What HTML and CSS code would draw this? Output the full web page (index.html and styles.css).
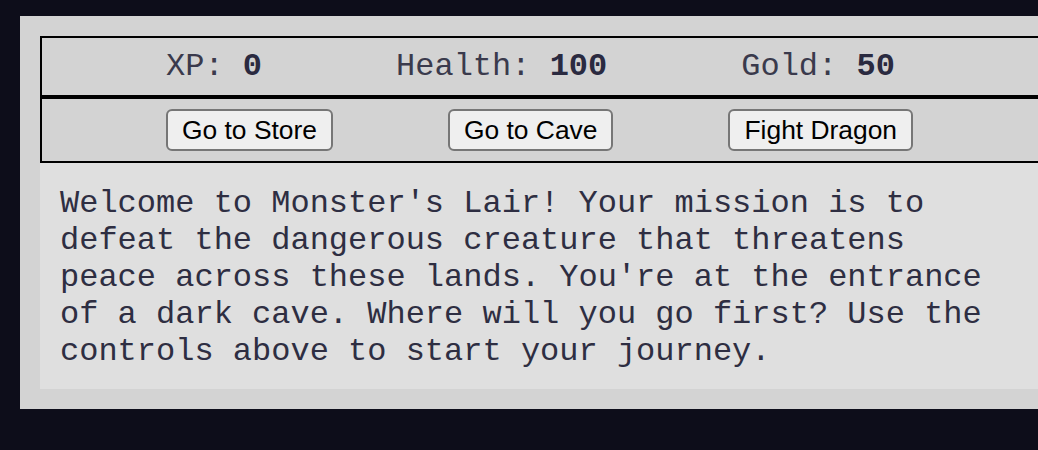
FILE: index.html
```html
<!DOCTYPE html>
<html lang="en">
<head>
<meta charset="utf-8">
<title>Monster's Lair</title>
<link rel="stylesheet" href="styles.css">
</head>
<body>
<div class="game">
  <div class="stats">
    <span class="stat">XP: <strong class="stat-value">0</strong></span>
    <span class="stat">Health: <strong class="stat-value">100</strong></span>
    <span class="stat">Gold: <strong class="stat-value">50</strong></span>
  </div>
  <div class="controls">
    <button class="btn">Go to Store</button>
    <button class="btn">Go to Cave</button>
    <button class="btn">Fight Dragon</button>
  </div>
  <div class="text">Welcome to Monster's Lair! Your mission is to defeat the dangerous creature that threatens peace across these lands. You're at the entrance of a dark cave. Where will you go first? Use the controls above to start your journey.</div>
</div>
</body>
</html>
```

FILE: styles.css
```css
html, body {
  margin: 0;
  padding: 0;
  overflow: hidden;
  background: #0d0d1a;
}

body {
  font-family: "Liberation Mono", "Courier New", monospace;
  color: #2e2e42;
}

.game {
  margin: 16px 0 0 20px;
  width: 1040px;
  padding: 20px;
  background: #d3d3d3;
}

.stats {
  display: flex;
  gap: 134px;
  padding: 10px 0 10px 124px;
  border: 2px solid #000;
  font-size: 32px;
  line-height: 37px;
  color: #3a3a4c;
}

.stat-value {
  font-weight: bold;
  color: #2a2a40;
}

.controls {
  display: flex;
  gap: 115px;
  padding: 10px 0 10px 124px;
  border: 2px solid #000;
}

.btn {
  font-family: "Liberation Sans", Arial, sans-serif;
  font-size: 26.4px;
  height: 42px;
  padding: 0 14px;
  border: 2px solid #767676;
  border-radius: 6px;
  background: #efefef;
  color: #000;
}

.text {
  background: #dfdfdf;
  padding: 22px 80px 19px 20px;
  font-size: 32px;
  line-height: 37px;
  color: #2e2e42;
}
```
